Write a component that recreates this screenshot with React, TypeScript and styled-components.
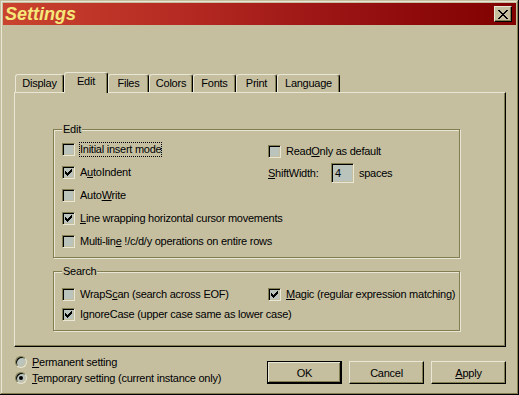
import React from "react";
import styled, { createGlobalStyle, css } from "styled-components";

const C = {
  face: "#C5BFA0",
  hl: "#E8E6D5",
  sh: "#827E52",
  dk: "#000000",
  field: "#BAC4BC",
};

const Global = createGlobalStyle`
  html, body { margin: 0; padding: 0; background: ${C.face}; }
  body { font-family: "Liberation Sans", Arial, sans-serif; font-size: 11px; letter-spacing: -0.25px; color: #000; }
  * { box-sizing: border-box; }
`;

const Window = styled.div`
  width: 519px;
  height: 395px;
  padding: 3px;
  display: flex;
  flex-direction: column;
  background: ${C.face};
  box-shadow: inset -1px -1px 0 #000, inset 1px 1px 0 ${C.face},
    inset -2px -2px 0 ${C.sh}, inset 2px 2px 0 ${C.hl};
`;

const TitleBar = styled.div`
  height: 22px;
  flex: none;
  display: flex;
  align-items: center;
  justify-content: space-between;
  padding: 0 4px 0 2px;
  background: linear-gradient(to right, #c9432f 0%, #b52a22 35%, #9a1414 65%, #800000 100%);
`;

const Title = styled.span`
  font-family: "Liberation Sans", Arial, sans-serif;
  font-weight: bold;
  font-style: italic;
  font-size: 18px;
  letter-spacing: 0;
  line-height: 22px;
  color: #f5e77a;
`;

const CloseButton = styled.button`
  width: 18px;
  height: 16px;
  padding: 0;
  display: flex;
  align-items: center;
  justify-content: center;
  background: ${C.face};
  border: 1px solid;
  border-color: ${C.hl} #000 #000 ${C.hl};
  box-shadow: inset -1px -1px 0 ${C.sh};
`;

const Body = styled.div`
  flex: 1;
  display: flex;
  flex-direction: column;
  padding: 47px 10px 0 11px;
`;

const TabStrip = styled.div`
  height: 20px;
  display: flex;
  align-items: flex-end;
  padding-left: 1px;
  position: relative;
  z-index: 1;
`;

const Tab = styled.div<{ $w: number; $active?: boolean }>`
  width: ${(p) => p.$w}px;
  height: ${(p) => (p.$active ? 21 : 18)}px;
  margin-bottom: ${(p) => (p.$active ? -1 : 0)}px;
  background: ${C.face};
  border-top: 1px solid ${C.hl};
  border-left: 1px solid ${C.hl};
  border-right: 1px solid #000;
  box-shadow: inset -1px 0 0 ${C.sh};
  border-radius: 3px 3px 0 0;
  text-align: center;
  line-height: 13px;
  padding-top: 2px;
  white-space: nowrap;
`;

const Panel = styled.div`
  height: 255px;
  border: 1px solid;
  border-color: ${C.hl} #000 #000 ${C.hl};
  box-shadow: inset -1px -1px 0 ${C.sh};
  padding: 30px 0 0 38px;
  display: flex;
  flex-direction: column;
`;

const Group = styled.fieldset<{ $pt: number; $pb: number }>`
  width: 407px;
  min-width: 0;
  margin: 0;
  padding: ${(p) => p.$pt}px 8px ${(p) => p.$pb}px 8px;
  border: 1px solid ${C.sh};
  box-shadow: 1px 1px 0 ${C.hl}, inset 1px 1px 0 ${C.hl};
  & + & {
    margin-top: 7px;
  }
`;

const Legend = styled.legend`
  margin-left: 0;
  padding: 0 1px;
  line-height: 13px;
  background: ${C.face};
`;

const Grid = styled.div<{ $rows: number; $h: number }>`
  display: grid;
  grid-template-columns: 206px 1fr;
  grid-template-rows: repeat(${(p) => p.$rows}, ${(p) => p.$h}px);
  grid-auto-flow: column;
`;

const CheckRow = styled.label<{ $nudge?: number }>`
  display: flex;
  align-items: center;
  gap: 4px;
  white-space: nowrap;
  margin-top: ${(p) => p.$nudge ?? 0}px;
`;

const Box = styled.span`
  width: 13px;
  height: 13px;
  flex: none;
  display: flex;
  align-items: center;
  justify-content: center;
  background: ${C.field};
  border: 1px solid;
  border-color: ${C.sh} ${C.hl} ${C.hl} ${C.sh};
  box-shadow: inset 1px 1px 0 #000, inset -1px -1px 0 ${C.face};
`;

const Text = styled.span<{ $focus?: boolean }>`
  border: 1px dotted ${(p) => (p.$focus ? "#000" : "transparent")};
  line-height: 13px;
`;

const Acc = styled.span`
  text-decoration: underline;
  text-underline-offset: 1px;
`;

const FieldRow = styled.div`
  display: flex;
  align-items: center;
  white-space: nowrap;
`;

const FieldLabel = styled.span`
  width: 63px;
`;

const Input = styled.div`
  width: 23px;
  height: 20px;
  border: 1px solid;
  border-color: ${C.sh} ${C.hl} ${C.hl} ${C.sh};
  box-shadow: inset 1px 1px 0 #000, inset -1px -1px 0 ${C.face};
  background: ${C.field};
  padding-left: 3px;
  line-height: 18px;
`;

const Unit = styled.span`
  margin-left: 5px;
`;

const Footer = styled.div`
  display: flex;
  justify-content: space-between;
  align-items: flex-start;
  margin-top: 7px;
`;

const Radios = styled.div`
  display: flex;
  flex-direction: column;
  margin-left: 1px;
`;

const RadioRow = styled.label`
  height: 16px;
  display: flex;
  align-items: center;
  gap: 5px;
  white-space: nowrap;
`;

const RadioDot = styled.span<{ $on?: boolean }>`
  width: 12px;
  height: 12px;
  flex: none;
  border-radius: 50%;
  border: 1px solid;
  border-color: ${C.sh} ${C.hl} ${C.hl} ${C.sh};
  box-shadow: inset 1px 1px 0 #000, inset -1px -1px 0 ${C.face};
  background: ${C.field};
  display: flex;
  align-items: center;
  justify-content: center;
  &::after {
    content: "";
    width: 4px;
    height: 4px;
    border-radius: 50%;
    background: ${(p) => (p.$on ? "#000" : "transparent")};
  }
`;

const Buttons = styled.div`
  display: flex;
  gap: 7px;
  margin-top: 7px;
`;

const Button = styled.button<{ $default?: boolean }>`
  width: 75px;
  height: 23px;
  padding: 0;
  font-family: "Liberation Sans", Arial, sans-serif;
  font-size: 11px;
  letter-spacing: -0.25px;
  color: #000;
  background: ${C.face};
  border: 1px solid;
  border-color: ${C.hl} #000 #000 ${C.hl};
  box-shadow: inset -1px -1px 0 ${C.sh};
  ${(p) =>
    p.$default &&
    css`
      border-color: #000;
      box-shadow: inset -1px -1px 0 #000, inset 1px 1px 0 ${C.hl},
        inset -2px -2px 0 ${C.sh};
    `}
`;

function pixelPath(rows: string[]): string {
  let d = "";
  rows.forEach((r, y) => {
    for (let x = 0; x < r.length; x++) {
      if (r[x] === "x") d += `M${x} ${y}h1v1h-1z`;
    }
  });
  return d;
}

const CHECK = pixelPath([
  "......x",
  ".....xx",
  "x...xxx",
  "xx.xxx.",
  "xxxxx..",
  ".xxx...",
  "..x....",
]);

const CLOSE = pixelPath([
  "xx......xx",
  ".xx....xx.",
  "..xx..xx..",
  "...xxxx...",
  "....xx....",
  "...xxxx...",
  "..xx..xx..",
  ".xx....xx.",
  "xx......xx",
]);

const CheckMark = () => (
  <svg width="7" height="7" viewBox="0 0 7 7" shapeRendering="crispEdges">
    <path d={CHECK} fill="#000" />
  </svg>
);

const Check: React.FC<{
  checked?: boolean;
  focus?: boolean;
  nudge?: number;
  children: React.ReactNode;
}> = ({ checked, focus, nudge, children }) => (
  <CheckRow $nudge={nudge}>
    <Box>{checked && <CheckMark />}</Box>
    <Text $focus={focus}>{children}</Text>
  </CheckRow>
);

const tabs: { label: string; w: number; active?: boolean }[] = [
  { label: "Display", w: 49 },
  { label: "Edit", w: 44, active: true },
  { label: "Files", w: 41 },
  { label: "Colors", w: 44 },
  { label: "Fonts", w: 43 },
  { label: "Print", w: 41 },
  { label: "Language", w: 63 },
];

export default function App() {
  return (
    <>
      <Global />
      <Window>
        <TitleBar>
          <Title>Settings</Title>
          <CloseButton aria-label="Close">
            <svg width="10" height="9" viewBox="0 0 10 9" shapeRendering="crispEdges">
              <path d={CLOSE} fill="#000" />
            </svg>
          </CloseButton>
        </TitleBar>
        <Body>
          <TabStrip>
            {tabs.map((t) => (
              <Tab key={t.label} $w={t.w} $active={t.active}>
                {t.label}
              </Tab>
            ))}
          </TabStrip>
          <Panel>
            <Group $pt={2} $pb={4}>
              <Legend>Edit</Legend>
              <Grid $rows={5} $h={23}>
                <Check focus>Initial insert mode</Check>
                <Check checked>
                  A<Acc>u</Acc>toIndent
                </Check>
                <Check>
                  Auto<Acc>W</Acc>rite
                </Check>
                <Check checked>
                  <Acc>L</Acc>ine wrapping horizontal cursor movements
                </Check>
                <Check>
                  Multi-lin<Acc>e</Acc> !/c/d/y operations on entire rows
                </Check>
                <Check nudge={3}>
                  Read<Acc>O</Acc>nly as default
                </Check>
                <FieldRow>
                  <FieldLabel>
                    <Acc>S</Acc>hiftWidth:
                  </FieldLabel>
                  <Input>4</Input>
                  <Unit>spaces</Unit>
                </FieldRow>
              </Grid>
            </Group>
            <Group $pt={6} $pb={6}>
              <Legend>Search</Legend>
              <Grid $rows={2} $h={20}>
                <Check>
                  WrapS<Acc>c</Acc>an (search across EOF)
                </Check>
                <Check checked>
                  I<Acc>g</Acc>noreCase (upper case same as lower case)
                </Check>
                <Check checked>
                  <Acc>M</Acc>agic (regular expression matching)
                </Check>
              </Grid>
            </Group>
          </Panel>
          <Footer>
            <Radios>
              <RadioRow>
                <RadioDot />
                <span>
                  <Acc>P</Acc>ermanent setting
                </span>
              </RadioRow>
              <RadioRow>
                <RadioDot $on />
                <span>
                  <Acc>T</Acc>emporary setting (current instance only)
                </span>
              </RadioRow>
            </Radios>
            <Buttons>
              <Button $default>OK</Button>
              <Button>Cancel</Button>
              <Button>
                <Acc>A</Acc>pply
              </Button>
            </Buttons>
          </Footer>
        </Body>
      </Window>
    </>
  );
}
